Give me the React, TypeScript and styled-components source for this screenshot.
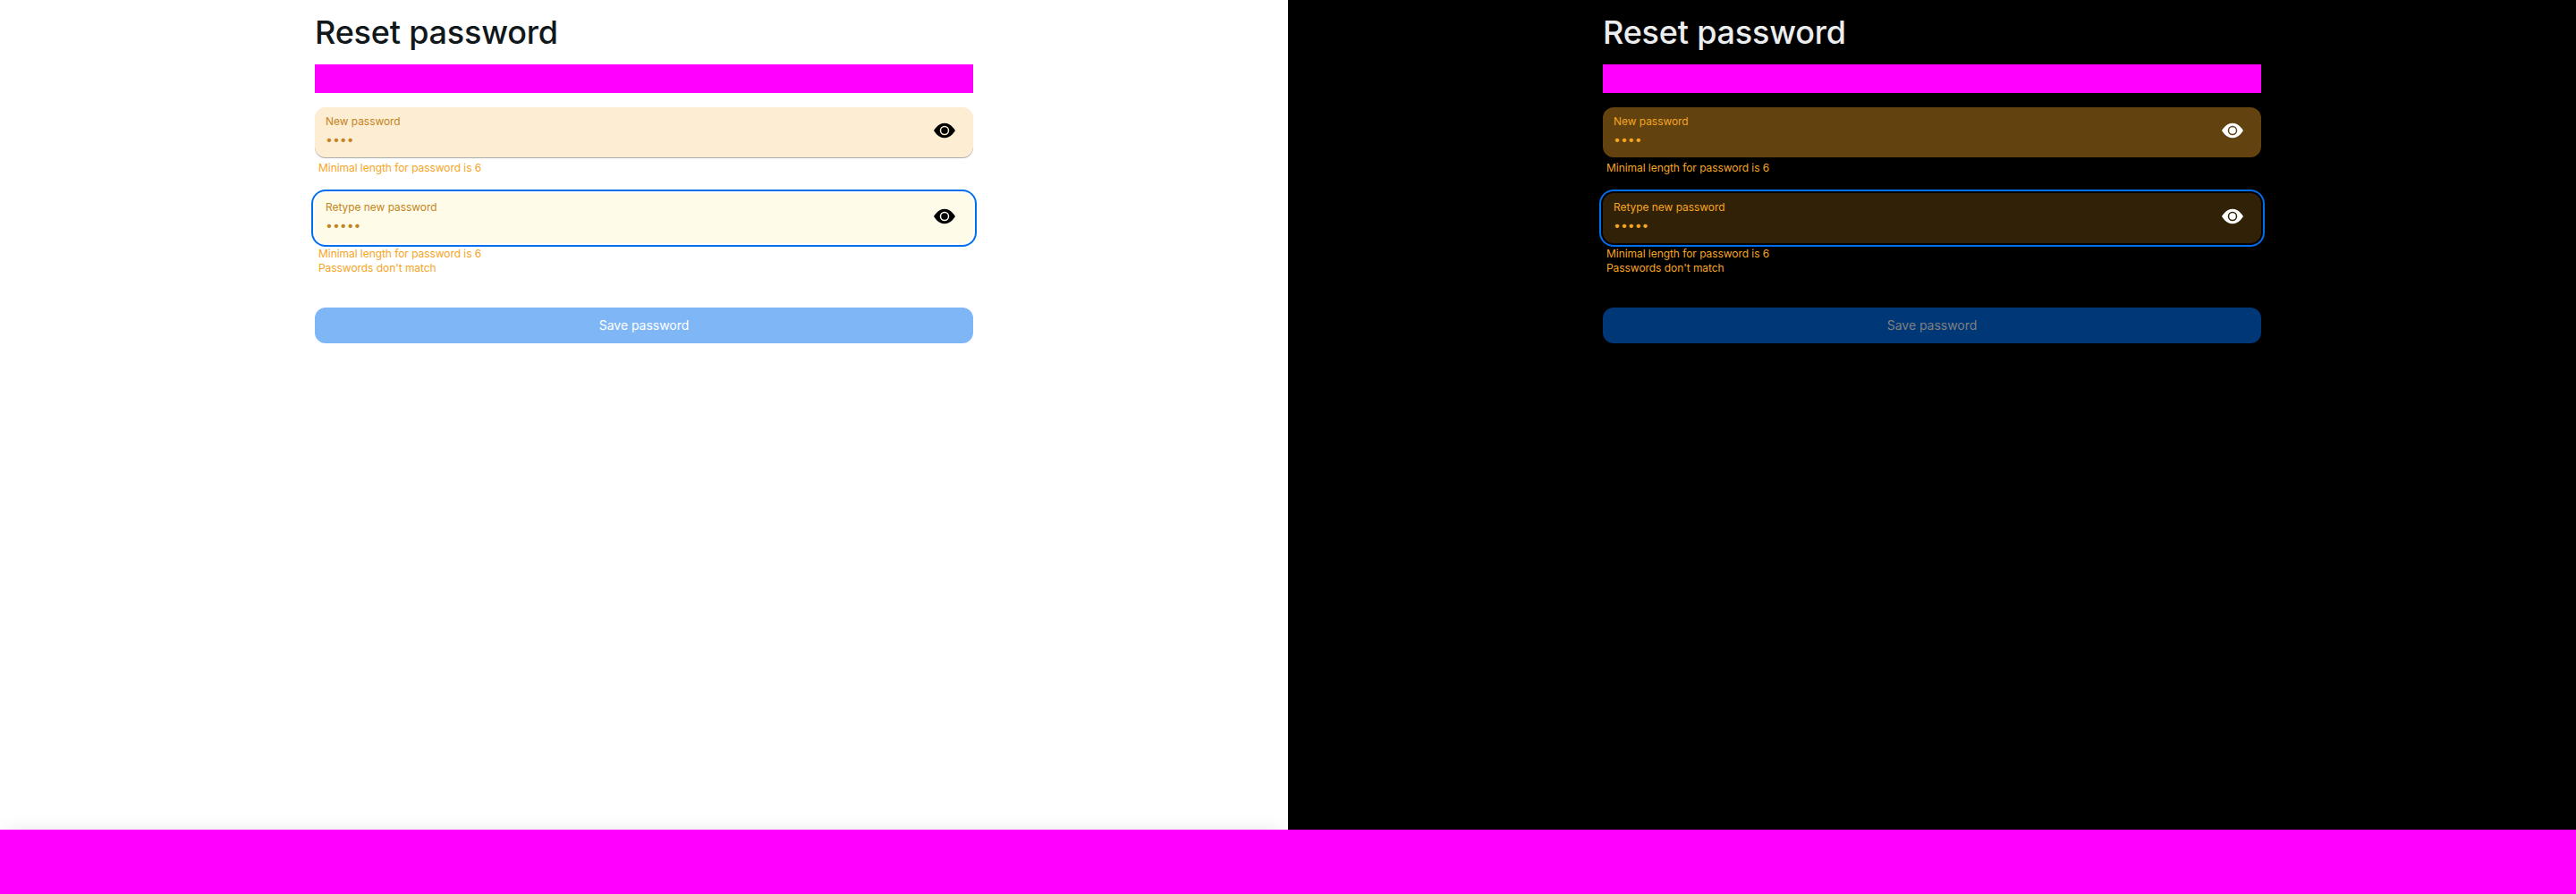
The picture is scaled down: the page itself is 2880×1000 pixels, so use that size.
import React from "react";
import styled, { createGlobalStyle, ThemeProvider } from "styled-components";
import { BsEyeFill } from "react-icons/bs";

interface Palette {
  background: string;
  foreground: string;
  field: string;
  fieldFocused: string;
  fieldText: string;
  fieldShadow: string;
  icon: string;
  button: string;
  buttonText: string;
  footerShadow: string;
}

const light: Palette = {
  background: "#ffffff",
  foreground: "#11181c",
  field: "#fdedd3",
  fieldFocused: "#fefce8",
  fieldText: "#c4841d",
  fieldShadow: "0 1px 0 0 rgba(0, 0, 0, 0.3), 0 1px 2px 0 rgba(0, 0, 0, 0.05)",
  icon: "#000000",
  button: "#7fb7f6",
  buttonText: "#ffffff",
  footerShadow: "0 0 20px rgba(0, 0, 0, 0.09)",
};

const dark: Palette = {
  background: "#000000",
  foreground: "#ecedee",
  field: "#62420e",
  fieldFocused: "#312107",
  fieldText: "#f5a524",
  fieldShadow: "none",
  icon: "#ffffff",
  button: "#003777",
  buttonText: "#808080",
  footerShadow: "none",
};

const GlobalStyle = createGlobalStyle`
  *, *::before, *::after { box-sizing: border-box; }
  body {
    margin: 0;
    font-family: Inter, "Liberation Sans", sans-serif;
  }
`;

const Page = styled.div`
  display: grid;
  grid-template-rows: 928px 72px;
  height: 1000px;
`;

const Themes = styled.div`
  display: grid;
  grid-template-columns: 1fr 1fr;
`;

const Panel = styled.section<{ theme: Palette }>`
  display: flex;
  flex-direction: column;
  overflow: hidden;
  background: ${({ theme }) => theme.background};
  color: ${({ theme }) => theme.foreground};
`;

const Form = styled.form`
  flex: 1;
  display: flex;
  flex-direction: column;
  width: 736px;
  margin: 0 auto;
  padding-top: 16px;
`;

const Title = styled.h1`
  margin: 0 0 16px;
  font-size: 36px;
  line-height: 40px;
  font-weight: 500;
  letter-spacing: -0.2px;
`;

const Mask = styled.div`
  height: 32px;
  margin-bottom: 16px;
  background: #ff00ff;
`;

const Field = styled.div`
  display: flex;
  flex-direction: column;
  min-height: 96px;
`;

const InputBox = styled.div<{ $focused: boolean; theme: Palette }>`
  display: flex;
  justify-content: space-between;
  height: 56px;
  padding: 7px 20px 8px 12px;
  border-radius: 12px;
  background: ${({ $focused, theme }) => ($focused ? theme.fieldFocused : theme.field)};
  box-shadow: ${({ $focused, theme }) =>
    $focused ? `0 0 0 2px ${theme.background}, 0 0 0 4px #006fee` : theme.fieldShadow};
`;

const Entry = styled.div<{ theme: Palette }>`
  display: flex;
  flex-direction: column;
  flex: 1;
  color: ${({ theme }) => theme.fieldText};
`;

const Label = styled.label`
  height: 16px;
  font-size: 14px;
  line-height: 20px;
  transform: scale(0.85);
  transform-origin: 0 0;
`;

const Input = styled.input`
  height: 20px;
  margin-top: 3px;
  padding: 0;
  border: 0;
  outline: 0;
  background: transparent;
  color: inherit;
  font: 14px/20px Inter, "Liberation Sans", sans-serif;
`;

const EyeButton = styled.button<{ theme: Palette }>`
  display: flex;
  width: 24px;
  height: 24px;
  margin-top: 7px;
  padding: 0;
  border: 0;
  background: transparent;
  color: ${({ theme }) => theme.icon};
`;

const Messages = styled.div`
  display: flex;
  flex-direction: column;
  padding: 4px 4px 0;
  font-size: 12px;
  line-height: 16px;
  letter-spacing: -0.055px;
  color: #f5a524;
`;

const SaveButton = styled.button<{ theme: Palette }>`
  height: 40px;
  margin-top: 32px;
  padding: 0 16px;
  border: 0;
  border-radius: 12px;
  background: ${({ theme }) => theme.button};
  color: ${({ theme }) => theme.buttonText};
  font: 400 14px/20px Inter, "Liberation Sans", sans-serif;
  letter-spacing: -0.03px;
`;

const FooterEdge = styled.div<{ theme: Palette }>`
  flex: none;
  height: 56px;
  margin: 0 6px -56px;
  box-shadow: ${({ theme }) => theme.footerShadow};
`;

const Footer = styled.footer`
  background: #ff00ff;
`;

interface PasswordFieldProps {
  label: string;
  value: string;
  focused?: boolean;
  errors: string[];
}

function PasswordField({ label, value, focused = false, errors }: PasswordFieldProps) {
  return (
    <Field>
      <InputBox $focused={focused}>
        <Entry>
          <Label>{label}</Label>
          <Input type="password" value={value} readOnly aria-label={label} />
        </Entry>
        <EyeButton type="button" aria-label="Show password">
          <BsEyeFill size={24} />
        </EyeButton>
      </InputBox>
      <Messages>
        {errors.map((error) => (
          <span key={error}>{error}</span>
        ))}
      </Messages>
    </Field>
  );
}

function ResetPassword() {
  return (
    <Panel>
      <Form>
        <Title>Reset password</Title>
        <Mask />
        <PasswordField label="New password" value="1234" errors={["Minimal length for password is 6"]} />
        <PasswordField
          label="Retype new password"
          value="12345"
          focused
          errors={["Minimal length for password is 6", "Passwords don't match"]}
        />
        <SaveButton type="button">Save password</SaveButton>
      </Form>
      <FooterEdge />
    </Panel>
  );
}

export default function App() {
  return (
    <Page>
      <GlobalStyle />
      <Themes>
        {[light, dark].map((theme, index) => (
          <ThemeProvider key={index} theme={theme}>
            <ResetPassword />
          </ThemeProvider>
        ))}
      </Themes>
      <Footer />
    </Page>
  );
}
